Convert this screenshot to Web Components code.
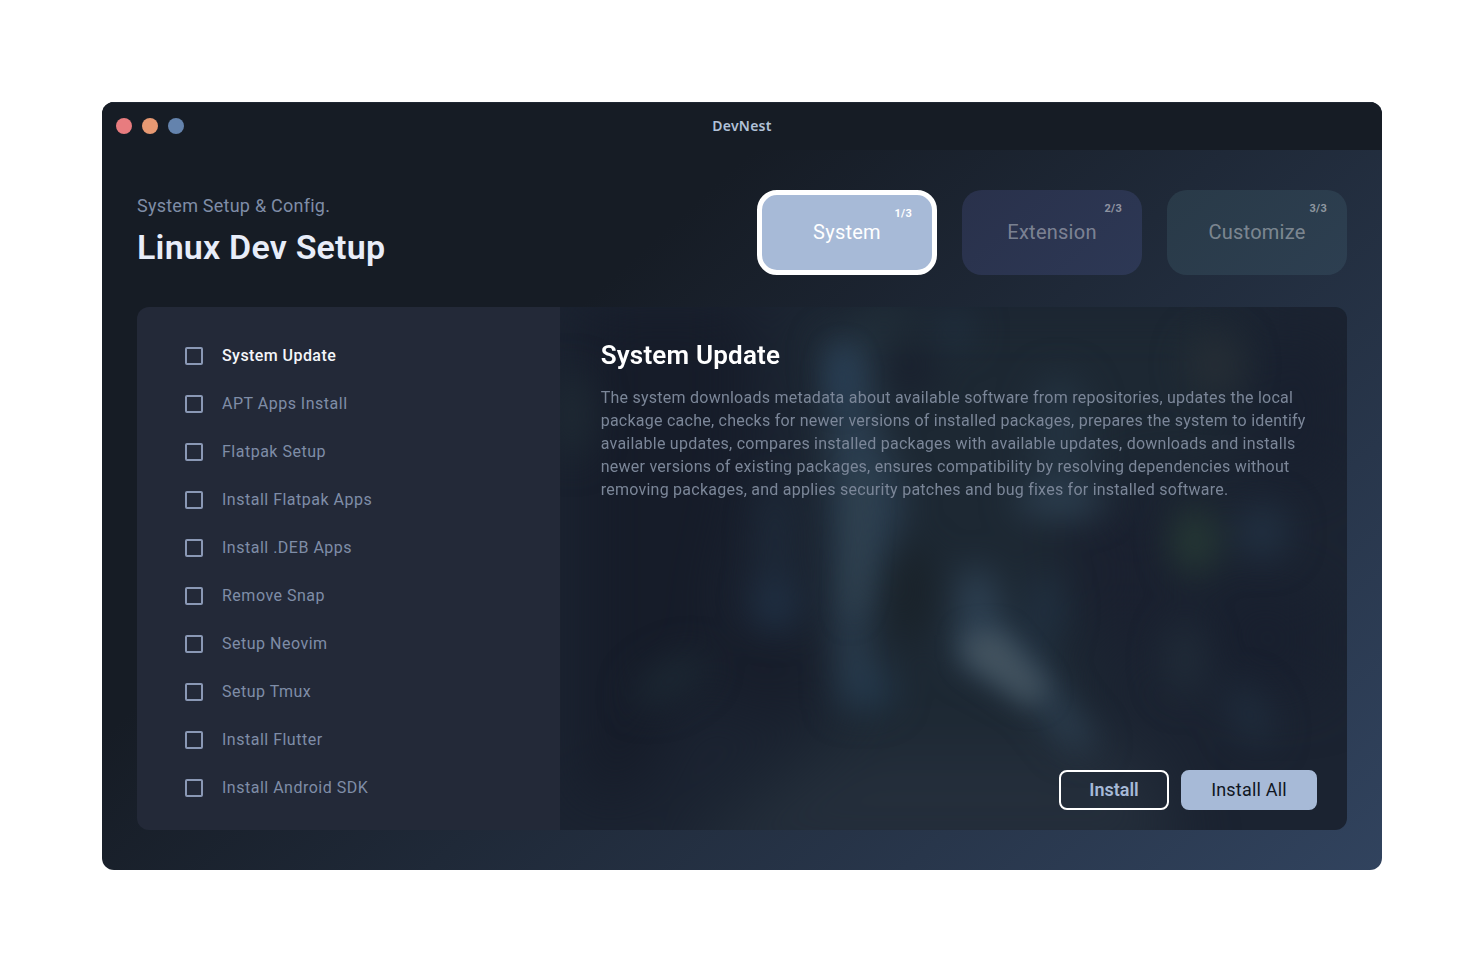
<!DOCTYPE html>
<html lang="en">
<head>
<meta charset="utf-8">
<title>DevNest</title>
<style>
body{margin:0;background:#fff;font-family:Roboto,sans-serif}
</style>
</head>
<body>
<dev-nest></dev-nest>
<script>
const define = (name, html, init) => {
  const template = document.createElement('template');
  template.innerHTML = '<style>:host,*{box-sizing:border-box}</style>' + html;
  customElements.define(name, class extends HTMLElement {
    constructor() {
      super();
      this.attachShadow({ mode: 'open' }).append(template.content.cloneNode(true));
    }
    connectedCallback() { if (init) init(this, this.shadowRoot); }
  });
};

define('title-bar', `
<style>
:host{display:grid;grid-template-columns:1fr auto 1fr;align-items:center;height:48px;padding:0 14px;background:#161c25;box-shadow:inset 0 1px #1f2733}
.lights{display:flex;gap:10px}
i{width:16px;height:16px;border-radius:50%;background:#e87c7f}
i:nth-child(2){background:#e79973}
i:nth-child(3){background:#6483ad}
b{font:600 14px/20px "Noto Sans",sans-serif;letter-spacing:.25px;color:#b1c1d8}
</style>
<div class="lights"><i></i><i></i><i></i></div><b><slot></slot></b>`);

define('page-heading', `
<style>
:host{display:block;padding-top:3px}
p{margin:0;font-size:18px;line-height:25px;letter-spacing:.24px;color:#7f8da7}
h1{margin:9px 0 0;font-size:34px;line-height:40px;font-weight:560;letter-spacing:.21px;color:#e8edf9}
</style>
<p><slot name="kicker"></slot></p><h1><slot></slot></h1>`);

define('step-card', `
<style>
:host{display:grid;place-items:center;position:relative;width:180px;height:85px;padding-bottom:2px;border-radius:20px;background:var(--card);color:rgba(255,255,255,.4);font-size:20px;line-height:24px;letter-spacing:.25px}
:host([active]){border:5px solid #fff;color:#fff}
small{position:absolute;top:12px;right:20px;font-size:11px;line-height:13px;font-weight:700;letter-spacing:.3px;color:rgba(255,255,255,.48)}
:host([active]) small{color:#fff}
</style>
<span><slot></slot></span><small></small>`,
(el, root) => { root.querySelector('small').textContent = el.getAttribute('step'); });

define('task-item', `
<style>
:host{display:flex;align-items:center;gap:19px;height:48px;font-size:16px;line-height:20px;letter-spacing:.5px;color:#7f8da7}
:host([current]){color:#f4f6fa;font-weight:500;letter-spacing:.43px}
i{width:18px;height:18px;border:2px solid #8a98b5;border-radius:2px;position:relative;top:.5px}
</style>
<i></i><span><slot></slot></span>`);

define('action-button', `
<style>
:host{display:grid;place-items:center;height:40px;width:var(--w);border:2px solid #fff;border-radius:8px;font-size:18px;line-height:22px;font-weight:600;color:#a7bad7}
:host([solid]){border-color:#a7bad7;background:#a7bad7;color:#101622;font-weight:450;letter-spacing:.2px}
</style>
<span><slot></slot></span>`);

define('blurred-backdrop', `
<style>
:host{display:block;position:absolute;inset:0;overflow:hidden;background:#1b2331}
svg{display:block;width:100%;height:100%}
</style>
<svg viewBox="560 307 787 523" preserveAspectRatio="none" color-interpolation-filters="sRGB">
<defs>
<filter id="w" x="-100%" y="-100%" width="300%" height="300%"><feGaussianBlur stdDeviation="30"/></filter>
<filter id="m" x="-100%" y="-100%" width="300%" height="300%"><feGaussianBlur stdDeviation="17"/></filter>
<filter id="s" x="-100%" y="-100%" width="300%" height="300%"><feGaussianBlur stdDeviation="13"/></filter>
</defs>
<g filter="url(#w)">
<path d="M580 300H750L750 480 720 620 640 790 580 800Z" fill="#161c29"/>
<path d="M790 300H1240V470H1120L1080 600 1110 830H700L840 720Z" fill="#1d2833"/>
<path d="M840 750H1150L1180 870H660Z" fill="#242e3b"/>
<path d="M1060 510H1160V640H1080Z" fill="#1a202f"/>
<path d="M1270 340H1330V480H1260ZM1200 590H1320V690H1230Z" fill="#181f2e"/>
<path d="M700 630H820V710H720Z" fill="#171d2a"/>
</g>
<g filter="url(#m)">
<ellipse cx="572" cy="415" rx="20" ry="45" fill="#1e2933"/>
<path d="M825 340H865L875 420 905 500 880 580 865 640 890 700 840 710 835 560Z" fill="#2b3e50"/>
<ellipse cx="912" cy="370" rx="24" ry="24" fill="#19202e"/>
<ellipse cx="907" cy="592" rx="30" ry="48" fill="#1a232b"/>
<ellipse cx="1060" cy="500" rx="46" ry="17" fill="#2d4051"/>
<ellipse cx="1060" cy="430" rx="30" ry="55" fill="#233240"/>
<ellipse cx="775" cy="600" rx="20" ry="30" fill="#203247"/>
<ellipse cx="775" cy="540" rx="13" ry="60" fill="#1e2b3b"/>
<path d="M960 570H990L1005 630 1040 660 1070 710 1100 745 1070 750 1030 700 955 660Z" fill="#2e4153"/>
<ellipse cx="1045" cy="610" rx="16" ry="38" fill="#213142"/>
<ellipse cx="1195" cy="541" rx="24" ry="33" fill="#253834"/>
<ellipse cx="1262" cy="532" rx="27" ry="27" fill="#213041"/>
<ellipse cx="1215" cy="365" rx="28" ry="32" fill="#252d35"/>
<ellipse cx="885" cy="325" rx="28" ry="22" fill="#202d38"/>
<ellipse cx="955" cy="330" rx="17" ry="18" fill="#203040"/>
<ellipse cx="1185" cy="660" rx="20" ry="38" fill="#202b38"/>
<ellipse cx="1250" cy="715" rx="18" ry="34" fill="#1f2c3c" transform="rotate(-30 1250 715)"/>
<ellipse cx="670" cy="680" rx="42" ry="17" fill="#1c2833" transform="rotate(-30 670 680)"/>
<ellipse cx="870" cy="690" rx="24" ry="20" fill="#23384b"/>
</g>
<g filter="url(#s)">
<ellipse cx="842" cy="378" rx="14" ry="30" fill="#263d56" opacity=".6"/>
<path d="M852 470H870L862 600 848 625Z" fill="#33444f" opacity=".8"/>
<path d="M965 635L1000 632 1048 690 1030 705 965 660Z" fill="#43535f"/>
</g>
</svg>`);

define('setup-panel', `
<style>
:host{display:grid;grid-template-columns:423px 1fr;height:523px;border-radius:12px;overflow:hidden}
nav{background:#232938;padding:24.5px 48px 0}
section{position:relative;display:flex;flex-direction:column;padding:33px 30px 20px 40.7px}
h2,p{position:relative;margin:0}
h2{font-size:26px;line-height:31px;font-weight:560;letter-spacing:.2px;color:#fff}
p{margin-top:15px;font-size:16px;line-height:23px;letter-spacing:.245px;color:#7b8698;white-space:nowrap}
footer{position:relative;display:flex;justify-content:flex-end;gap:12px;margin-top:auto}
</style>
<nav></nav>
<section>
<blurred-backdrop></blurred-backdrop>
<h2>System Update</h2>
<p>The system downloads metadata about available software from repositories, updates the local<br>package cache, checks for newer versions of installed packages, prepares the system to identify<br>available updates, compares installed packages with available updates, downloads and installs<br>newer versions of existing packages, ensures compatibility by resolving dependencies without<br>removing packages, and applies security patches and bug fixes for installed software.</p>
<footer><action-button style="--w:110px">Install</action-button><action-button solid style="--w:136px">Install All</action-button></footer>
</section>`,
(el, root) => {
  const tasks = ['System Update','APT Apps Install','Flatpak Setup','Install Flatpak Apps','Install .DEB Apps','Remove Snap','Setup Neovim','Setup Tmux','Install Flutter','Install Android SDK'];
  root.querySelector('nav').append(...tasks.map((name, i) => {
    const item = document.createElement('task-item');
    item.textContent = name;
    item.toggleAttribute('current', i === 0);
    return item;
  }));
});

define('dev-nest', `
<style>
:host{display:block;padding:102px;height:972px}
main{height:768px;border-radius:12px;overflow:hidden;background:linear-gradient(138deg,#161c25 33%,#31435e 100%)}
.body{padding:40px 35px}
header{display:flex;justify-content:space-between;height:85px;margin-bottom:32px}
.steps{display:flex;gap:25px}
</style>
<main>
<title-bar>DevNest</title-bar>
<div class="body">
<header>
<page-heading><span slot="kicker">System Setup &amp; Config.</span>Linux Dev Setup</page-heading>
<div class="steps">
<step-card active step="1/3" style="--card:#a7bad7">System</step-card>
<step-card step="2/3" style="--card:linear-gradient(138deg,#29314b,#2d3855)">Extension</step-card>
<step-card step="3/3" style="--card:linear-gradient(138deg,#293a48,#2d3f51)">Customize</step-card>
</div>
</header>
<setup-panel></setup-panel>
</div>
</main>`);
</script>
</body>
</html>
